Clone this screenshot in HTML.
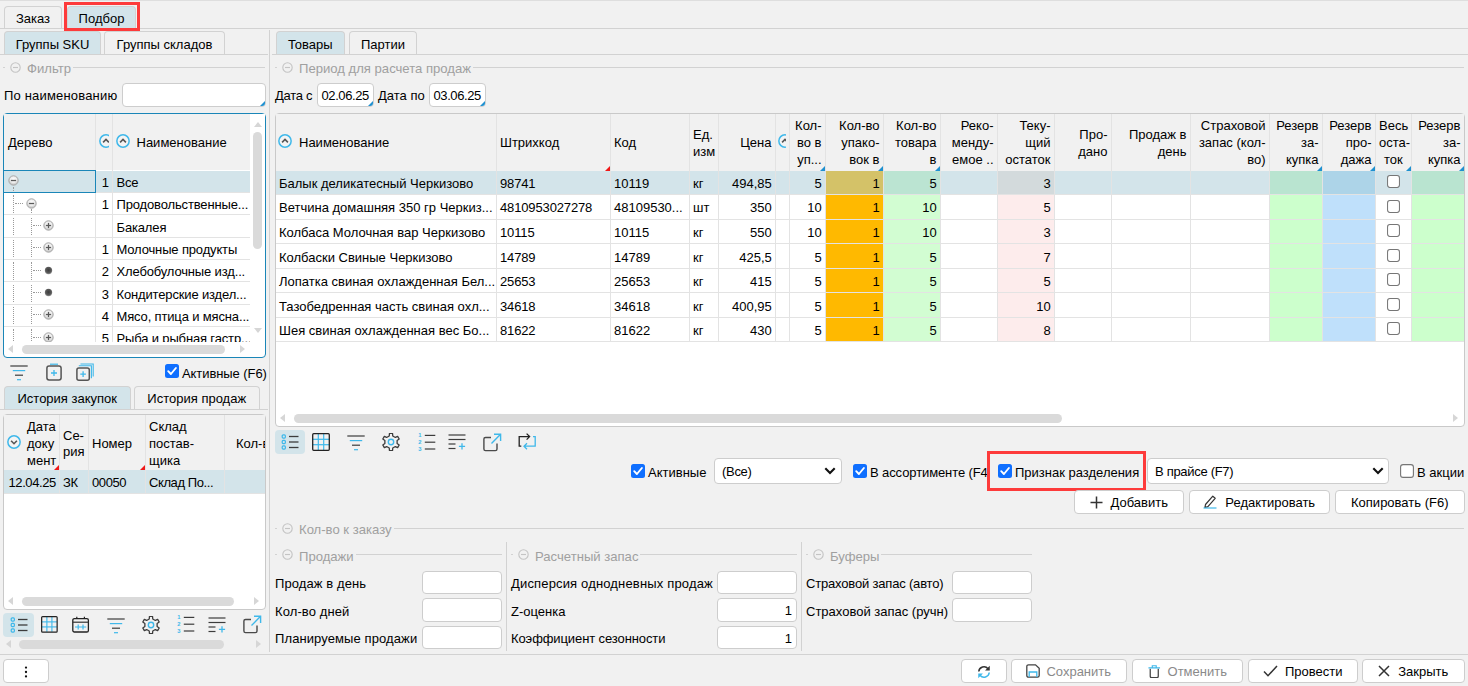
<!DOCTYPE html>
<html><head><meta charset="utf-8"><title>Подбор</title><style>
html,body{margin:0;padding:0}
body{width:1468px;height:686px;overflow:hidden;background:#f1f1f1;font-family:"Liberation Sans",sans-serif;font-size:13px;color:#000;position:relative}
#r{position:absolute;left:0;top:0;width:1468px;height:686px;overflow:hidden}
#r div,#r svg.ic,#r i{position:absolute;box-sizing:border-box}
.t{white-space:nowrap;line-height:15.8px}
.tab{border:1px solid #d2d2d2;border-bottom:none;border-radius:4px 4px 0 0;text-align:center;white-space:nowrap}
.fs{background:#f1f1f1;color:#a0a0a0;padding:0 2px 0 22px;font-size:13.1px}
.num{letter-spacing:-0.4px}
.num2{letter-spacing:-0.14px}
.hl{height:1px;background:#d2d2d2}
.vl{width:1px;background:#d2d2d2}
.vl2{width:1px;background:#e3e3e3}
.hl2{height:1px;background:#e3e3e3}
.red{border:3px solid #fd3b3b}
.inp{background:#fff;border:1px solid #cdcdcd;border-radius:4px;white-space:nowrap;padding:0 4px 0 3.5px;overflow:hidden}
.sel{background:#fff;border:1px solid #cdcdcd;border-radius:4px;white-space:nowrap;padding:0 7px;letter-spacing:-0.3px}
.btn{background:#fff;border:1px solid #cdcdcd;border-radius:4px;white-space:nowrap;text-align:center}
.tri{right:0;bottom:0;width:0;height:0;border-left:5px solid transparent;border-bottom:5px solid #1e90d0}
.trir{width:0;height:0;border-left:5px solid transparent;border-bottom:5px solid #f01818}
.trib{width:0;height:0;border-left:5px solid transparent;border-bottom:5px solid #1e90d0}
.treebox{background:#fff;border:1px solid #1a86b8;border-radius:4px}
.gridbox{background:#fff;border:1px solid #c9c9c9;border-radius:4px}
.hdr{background:#f1f1f1}
.clip{overflow:hidden}
.row{left:0;border-bottom:1px solid #e3e3e3}
.thumb{background:#dadada;border-radius:5px}
.arrL{width:0;height:0;border-top:4.8px solid transparent;border-bottom:4.8px solid transparent;border-right:5.5px solid #d6d6d6;margin-left:1px}
.arrR{width:0;height:0;border-top:4.8px solid transparent;border-bottom:4.8px solid transparent;border-left:5.5px solid #d6d6d6;margin-left:1px}
.arrU{width:0;height:0;border-left:4.5px solid transparent;border-right:4.5px solid transparent;border-bottom:5.5px solid #d6d6d6}
.arrD{width:0;height:0;border-left:4.5px solid transparent;border-right:4.5px solid transparent;border-top:5.5px solid #d6d6d6}
.dv{width:0;border-left:1px dotted #9a9a9a}
.dh{height:0;border-top:1px dotted #9a9a9a}
</style></head><body><div id="r">
<div class="hl" style="left:0;top:0;width:1468px;background:#dedede"></div>
<div class="tab" style="left:4px;top:6px;width:58px;height:22px;background:#f1f1f1;line-height:23px">Заказ</div>
<div class="tab" style="left:67px;top:6px;width:69px;height:22px;background:#d3e4ea;line-height:23px">Подбор</div>
<div class="hl" style="left:0;top:28px;width:1468px"></div>
<div class="red" style="left:64px;top:2px;width:76px;height:29px"></div>
<div class="vl" style="left:269px;top:30px;height:622px"></div>
<div class="tab" style="left:4px;top:31px;width:97px;height:23px;background:#d3e4ea;line-height:25.4px">Группы SKU</div>
<div class="tab" style="left:104px;top:31px;width:121px;height:23px;background:#f1f1f1;line-height:25.4px">Группы складов</div>
<div class="hl" style="left:0;top:54px;width:268px"></div>
<div class="hl" style="left:3px;top:67px;width:262px"></div>
<div class="t fs" style="left:5px;top:60.5px;">Фильтр</div>
<svg class="ic" style="left:10px;top:62px" width="11" height="11" viewBox="0 0 11 11"><circle cx="5.5" cy="5.5" r="4.7" fill="none" stroke="#c4c4c4" stroke-width="1.1"/><line x1="3" y1="5.5" x2="8" y2="5.5" stroke="#c4c4c4" stroke-width="1.1"/></svg>
<div class="t" style="left:4px;top:87.5px;letter-spacing:0.18px">По наименованию</div>
<div class="inp" style="left:122px;top:83px;width:143.5px;height:23.5px;line-height:23.5px;text-align:left"><i class="tri"></i></div>
<div class="treebox" style="left:3px;top:113px;width:263px;height:244.5px"></div>
<div class="hdr" style="left:4px;top:114px;width:246px;height:56px"></div>
<div class="t" style="left:8px;top:135px;">Дерево</div>
<svg class="ic" style="left:99px;top:134.3px" width="10" height="14" viewBox="0 0 10 14"><circle cx="7" cy="7" r="6.15" fill="#f4f4f4" stroke="#3fb8ea" stroke-width="1.5"/><path d="M4.1 8.4L7 5.5l2.9 2.9" fill="none" stroke="#555" stroke-width="1.6"/></svg>
<svg class="ic" style="left:116.1px;top:134.3px" width="14" height="14" viewBox="0 0 14 14"><circle cx="7" cy="7" r="6.15" fill="#f4f4f4" stroke="#3fb8ea" stroke-width="1.5"/><path d="M4.1 8.4L7 5.5l2.9 2.9" fill="none" stroke="#555" stroke-width="1.6"/></svg>
<div class="t" style="left:136.5px;top:135px;">Наименование</div>
<div class="clip" style="left:4px;top:170.5px;width:246px;height:171.5px">
<div class="row" style="top:0.0px;height:22.35px;width:246px;background:#d3e4ea"></div>
<div class="t" style="left:89px;top:4.5px;width:16px;text-align:right">1</div>
<div class="t" style="left:112.5px;top:4.5px;width:133.5px;overflow:hidden;letter-spacing:-0.15px">Все</div>
<div class="row" style="top:22.35px;height:22.35px;width:246px;background:#fff"></div>
<div class="t" style="left:89px;top:26.85px;width:16px;text-align:right">1</div>
<div class="t" style="left:112.5px;top:26.85px;width:133.5px;overflow:hidden;letter-spacing:-0.15px">Продовольственные...</div>
<div class="row" style="top:44.7px;height:22.35px;width:246px;background:#fff"></div>
<div class="t" style="left:89px;top:49.2px;width:16px;text-align:right"></div>
<div class="t" style="left:112.5px;top:49.2px;width:133.5px;overflow:hidden;letter-spacing:-0.15px">Бакалея</div>
<div class="row" style="top:67.05000000000001px;height:22.35px;width:246px;background:#fff"></div>
<div class="t" style="left:89px;top:71.55000000000001px;width:16px;text-align:right">1</div>
<div class="t" style="left:112.5px;top:71.55000000000001px;width:133.5px;overflow:hidden;letter-spacing:-0.15px">Молочные продукты</div>
<div class="row" style="top:89.4px;height:22.35px;width:246px;background:#fff"></div>
<div class="t" style="left:89px;top:93.9px;width:16px;text-align:right">2</div>
<div class="t" style="left:112.5px;top:93.9px;width:133.5px;overflow:hidden;letter-spacing:-0.15px">Хлебобулочные изд...</div>
<div class="row" style="top:111.75px;height:22.35px;width:246px;background:#fff"></div>
<div class="t" style="left:89px;top:116.25px;width:16px;text-align:right">3</div>
<div class="t" style="left:112.5px;top:116.25px;width:133.5px;overflow:hidden;letter-spacing:-0.15px">Кондитерские издел...</div>
<div class="row" style="top:134.10000000000002px;height:22.35px;width:246px;background:#fff"></div>
<div class="t" style="left:89px;top:138.60000000000002px;width:16px;text-align:right">4</div>
<div class="t" style="left:112.5px;top:138.60000000000002px;width:133.5px;overflow:hidden;letter-spacing:-0.15px">Мясо, птица и мясна...</div>
<div class="row" style="top:156.45000000000002px;height:22.35px;width:246px;background:#fff"></div>
<div class="t" style="left:89px;top:160.95000000000002px;width:16px;text-align:right">5</div>
<div class="t" style="left:112.5px;top:160.95000000000002px;width:133.5px;overflow:hidden;letter-spacing:-0.15px">Рыба и рыбная гастр...</div>
<svg class="ic" width="0" height="0" style="left:0;top:0"><defs><radialGradient id="gn" cx="50%" cy="40%" r="60%"><stop offset="0" stop-color="#ffffff"/><stop offset="0.55" stop-color="#ececec"/><stop offset="1" stop-color="#b4b4b4"/></radialGradient><radialGradient id="gd" cx="50%" cy="45%" r="55%"><stop offset="0" stop-color="#3c3c3c"/><stop offset="0.7" stop-color="#5a5a5a"/><stop offset="1" stop-color="#9a9a9a"/></radialGradient></defs></svg>
<div class="dv" style="left:9px;top:16.175px;height:4.175000000000001px"></div>
<div class="dv" style="left:9px;top:24.85px;height:17.35px"></div>
<div class="dv" style="left:9px;top:47.2px;height:17.35px"></div>
<div class="dv" style="left:9px;top:69.55000000000001px;height:17.35px"></div>
<div class="dv" style="left:9px;top:91.9px;height:17.35px"></div>
<div class="dv" style="left:9px;top:114.25px;height:17.35px"></div>
<div class="dv" style="left:9px;top:136.60000000000002px;height:17.35px"></div>
<div class="dv" style="left:9px;top:158.95000000000002px;height:17.35px"></div>
<div class="dv" style="left:27px;top:38.525000000000006px;height:4.175000000000001px"></div>
<div class="dv" style="left:27px;top:47.2px;height:17.35px"></div>
<div class="dv" style="left:27px;top:69.55000000000001px;height:17.35px"></div>
<div class="dv" style="left:27px;top:91.9px;height:17.35px"></div>
<div class="dv" style="left:27px;top:114.25px;height:17.35px"></div>
<div class="dv" style="left:27px;top:136.60000000000002px;height:17.35px"></div>
<div class="dv" style="left:27px;top:158.95000000000002px;height:17.35px"></div>
<div class="dh" style="left:10.5px;top:32.025000000000006px;width:8.5px"></div>
<div class="dh" style="left:28.5px;top:54.375px;width:8px"></div>
<div class="dh" style="left:28.5px;top:76.72500000000001px;width:8px"></div>
<div class="dh" style="left:28.5px;top:99.075px;width:8px"></div>
<div class="dh" style="left:28.5px;top:121.42500000000001px;width:8px"></div>
<div class="dh" style="left:28.5px;top:143.775px;width:8px"></div>
<div class="dh" style="left:28.5px;top:166.125px;width:8px"></div>
<svg class="ic" style="left:4.0px;top:4.675000000000001px" width="11" height="11"><circle cx="5.5" cy="5.5" r="4.7" fill="url(#gn)" stroke="#a9a9a9" stroke-width="1"/><line x1="2.9" y1="5.5" x2="8.1" y2="5.5" stroke="#5a5a5a" stroke-width="1.3"/></svg>
<svg class="ic" style="left:22.0px;top:27.025000000000006px" width="11" height="11"><circle cx="5.5" cy="5.5" r="4.7" fill="url(#gn)" stroke="#a9a9a9" stroke-width="1"/><line x1="2.9" y1="5.5" x2="8.1" y2="5.5" stroke="#5a5a5a" stroke-width="1.3"/></svg>
<svg class="ic" style="left:39.2px;top:49.375px" width="11" height="11"><circle cx="5.5" cy="5.5" r="4.7" fill="url(#gn)" stroke="#a9a9a9" stroke-width="1"/><line x1="2.9" y1="5.5" x2="8.1" y2="5.5" stroke="#5a5a5a" stroke-width="1.3"/><line x1="5.5" y1="2.9" x2="5.5" y2="8.1" stroke="#5a5a5a" stroke-width="1.3"/></svg>
<svg class="ic" style="left:39.2px;top:71.72500000000001px" width="11" height="11"><circle cx="5.5" cy="5.5" r="4.7" fill="url(#gn)" stroke="#a9a9a9" stroke-width="1"/><line x1="2.9" y1="5.5" x2="8.1" y2="5.5" stroke="#5a5a5a" stroke-width="1.3"/><line x1="5.5" y1="2.9" x2="5.5" y2="8.1" stroke="#5a5a5a" stroke-width="1.3"/></svg>
<svg class="ic" style="left:40.2px;top:95.075px" width="9" height="9"><circle cx="4.5" cy="4.5" r="3.7" fill="url(#gd)"/></svg>
<svg class="ic" style="left:40.2px;top:117.42500000000001px" width="9" height="9"><circle cx="4.5" cy="4.5" r="3.7" fill="url(#gd)"/></svg>
<svg class="ic" style="left:39.2px;top:138.775px" width="11" height="11"><circle cx="5.5" cy="5.5" r="4.7" fill="url(#gn)" stroke="#a9a9a9" stroke-width="1"/><line x1="2.9" y1="5.5" x2="8.1" y2="5.5" stroke="#5a5a5a" stroke-width="1.3"/><line x1="5.5" y1="2.9" x2="5.5" y2="8.1" stroke="#5a5a5a" stroke-width="1.3"/></svg>
<svg class="ic" style="left:39.2px;top:161.125px" width="11" height="11"><circle cx="5.5" cy="5.5" r="4.7" fill="url(#gn)" stroke="#a9a9a9" stroke-width="1"/><line x1="2.9" y1="5.5" x2="8.1" y2="5.5" stroke="#5a5a5a" stroke-width="1.3"/><line x1="5.5" y1="2.9" x2="5.5" y2="8.1" stroke="#5a5a5a" stroke-width="1.3"/></svg>
</div>
<div class="vl2" style="left:95px;top:114px;height:228px"></div>
<div class="vl2" style="left:112px;top:114px;height:228px"></div>
<div style="position:absolute;left:3px;top:170px;width:93px;height:23px;border:1px solid #1a86b8;"></div>
<div style="position:absolute;left:250px;top:114px;width:15px;height:229px;background:#fff"></div>
<div class="arrU" style="left:253.5px;top:122px"></div>
<div class="arrD" style="left:253.5px;top:328px"></div>
<div class="thumb" style="left:253px;top:132px;width:9px;height:117px"></div>
<div class="arrL" style="left:7px;top:345px"></div>
<div class="arrR" style="left:239px;top:345px"></div>
<div class="thumb" style="left:22px;top:345px;width:203px;height:9px"></div>
<svg class="ic" style="left:10px;top:363.6px" width="18" height="17" viewBox="0 0 18 17"><line x1="0.3" y1="2" x2="17.7" y2="2" stroke="#3c3c3c" stroke-width="1.2"/><line x1="2.8" y1="6.6" x2="15.2" y2="6.6" stroke="#3fb8ea" stroke-width="1.2"/><line x1="5" y1="11.2" x2="13" y2="11.2" stroke="#3c3c3c" stroke-width="1.2"/><line x1="7" y1="15.7" x2="11" y2="15.7" stroke="#3fb8ea" stroke-width="1.2"/></svg>
<svg class="ic" style="left:46px;top:363px" width="16" height="18" viewBox="0 0 16 18"><path d="M4 1.2h8" stroke="#3fb8ea" stroke-width="1.2"/><rect x="0.9" y="3" width="14.2" height="14" rx="2.2" fill="none" stroke="#555" stroke-width="1.5"/><path d="M8 7v6M5 10h6" stroke="#3fb8ea" stroke-width="1.3"/></svg>
<svg class="ic" style="left:76px;top:363px" width="18" height="18" viewBox="0 0 18 18"><path d="M4.5 1h12.7v12.5M2.8 2.8h12.6v12.4" fill="none" stroke="#3fb8ea" stroke-width="1.1"/><rect x="0.9" y="5" width="12.4" height="12.2" rx="2" fill="#f1f1f1" stroke="#555" stroke-width="1.5"/><path d="M7.1 8.3v5.6M4.3 11.1h5.6" stroke="#3fb8ea" stroke-width="1.3"/></svg>
<svg class="ic" style="left:165px;top:364px" width="14" height="14" viewBox="0 0 14 14"><rect x="0" y="0" width="14" height="14" rx="2.5" fill="#0f6fff"/><path d="M3.2 7.2l2.7 2.8 5-6" fill="none" stroke="#fff" stroke-width="1.9" stroke-linecap="round" stroke-linejoin="round"/></svg>
<div class="t" style="left:182px;top:365.5px;letter-spacing:-0.08px">Активные (F6)</div>
<div class="tab" style="left:4px;top:386px;width:126.5px;height:23px;background:#d3e4ea;line-height:23px">История закупок</div>
<div class="tab" style="left:134px;top:386px;width:125.5px;height:23px;background:#f1f1f1;line-height:23px">История продаж</div>
<div class="hl" style="left:0;top:409px;width:268px"></div>
<div class="gridbox" style="left:3px;top:414px;width:262.5px;height:196px"></div>
<div class="clip" style="left:4px;top:415px;width:261px;height:194px">
<div class="hdr" style="left:0;top:0;width:261px;height:55px"></div>
<div class="row" style="top:55px;height:23.5px;width:261px;background:#d3e4ea"></div>
<div class="vl2" style="left:55px;top:0;height:78.5px"></div>
<div class="vl2" style="left:84px;top:0;height:78.5px"></div>
<div class="vl2" style="left:141px;top:0;height:78.5px"></div>
<div class="vl2" style="left:220px;top:0;height:78.5px"></div>
<svg class="ic" style="left:2.8px;top:20.2px" width="14" height="14" viewBox="0 0 14 14"><circle cx="7" cy="7" r="6.15" fill="#f4f4f4" stroke="#3fb8ea" stroke-width="1.5"/><path d="M4.1 5.8L7 8.7l2.9-2.9" fill="none" stroke="#555" stroke-width="1.6"/></svg>
<div class="t" style="left:23px;top:4px;line-height:16.8px;">Дата<br>доку<br>мент</div>
<div class="t" style="left:59px;top:12.5px;line-height:16.8px;width:24px">Се-<br>рия</div>
<div class="t" style="left:88px;top:21px;">Номер</div>
<div class="t" style="left:145px;top:4px;line-height:16.8px;">Склад<br>постав-<br>щика</div>
<div class="t" style="left:232px;top:21px;">Кол-во</div>
<i class="trir" style="left:50px;top:50px"></i>
<i class="trir" style="left:136px;top:50px"></i>
<div class="t num" style="left:4.5px;top:59.5px;">12.04.25</div>
<div class="t num" style="left:59px;top:59.5px;">ЗК</div>
<div class="t num" style="left:88px;top:59.5px;">00050</div>
<div class="t num" style="left:145px;top:59.5px;">Склад По...</div>
</div>
<div class="arrL" style="left:7px;top:597px"></div>
<div class="arrR" style="left:253px;top:597px"></div>
<div class="thumb" style="left:22px;top:597px;width:212px;height:9px"></div>
<div style="position:absolute;left:3px;top:613px;width:31px;height:24px;border-radius:4px;background:#d3e4ea"></div>
<svg class="ic" style="left:9.5px;top:615.5px" width="18" height="18" viewBox="0 0 18 18"><rect x="1.2" y="1.9" width="3.2" height="3.2" rx="1" fill="none" stroke="#3fb8ea" stroke-width="1.2"/><line x1="8" y1="3.5" x2="17.5" y2="3.5" stroke="#3c3c3c" stroke-width="1.3"/><rect x="1.2" y="7.4" width="3.2" height="3.2" rx="1" fill="none" stroke="#3fb8ea" stroke-width="1.2"/><line x1="8" y1="9" x2="17.5" y2="9" stroke="#3c3c3c" stroke-width="1.3"/><rect x="1.2" y="12.9" width="3.2" height="3.2" rx="1" fill="none" stroke="#3fb8ea" stroke-width="1.2"/><line x1="8" y1="14.5" x2="17.5" y2="14.5" stroke="#3c3c3c" stroke-width="1.3"/></svg>
<svg class="ic" style="left:41px;top:616.2px" width="16.8" height="16.8" viewBox="0 0 18 18"><g stroke="#3fb8ea" stroke-width="1.2"><line x1="6.3" y1="1" x2="6.3" y2="17"/><line x1="1" y1="6.3" x2="17" y2="6.3"/><line x1="11.7" y1="1" x2="11.7" y2="17"/><line x1="1" y1="11.7" x2="17" y2="11.7"/></g><rect x="0.7" y="0.7" width="16.6" height="16.6" rx="1" fill="none" stroke="#222" stroke-width="1.3"/></svg>
<svg class="ic" style="left:72px;top:615px" width="18" height="18" viewBox="0 0 18 18"><rect x="0.8" y="3.6" width="15.6" height="13.4" rx="1.6" fill="none" stroke="#222" stroke-width="1.3"/><line x1="0.8" y1="7.2" x2="16.4" y2="7.2" stroke="#333" stroke-width="1.2"/><path d="M4.8 1.8v2M12.4 1.8v2" stroke="#222" stroke-width="1.2"/><path d="M3 12h11.2M6.2 9.4v5.2M11 9.4v5.2" stroke="#3fb8ea" stroke-width="1.2" fill="none"/></svg>
<svg class="ic" style="left:107px;top:616.5px" width="18" height="17" viewBox="0 0 18 17"><line x1="0.3" y1="2" x2="17.7" y2="2" stroke="#3c3c3c" stroke-width="1.2"/><line x1="2.8" y1="6.6" x2="15.2" y2="6.6" stroke="#3fb8ea" stroke-width="1.2"/><line x1="5" y1="11.2" x2="13" y2="11.2" stroke="#3c3c3c" stroke-width="1.2"/><line x1="7" y1="15.7" x2="11" y2="15.7" stroke="#3fb8ea" stroke-width="1.2"/></svg>
<svg class="ic" style="left:141.5px;top:615.5px" width="18" height="18" viewBox="0 0 18 18"><path d="M7.46 0.44 L10.54 0.44 L10.76 2.95 L13.36 4.45 L15.65 3.38 L17.19 6.05 L15.12 7.50 L15.12 10.50 L17.19 11.95 L15.65 14.62 L13.36 13.55 L10.76 15.05 L10.54 17.56 L7.46 17.56 L7.24 15.05 L4.64 13.55 L2.35 14.62 L0.81 11.95 L2.88 10.50 L2.88 7.50 L0.81 6.05 L2.35 3.38 L4.64 4.45 L7.24 2.95Z" fill="none" stroke="#3c3c3c" stroke-width="1.3" stroke-linejoin="round"/><circle cx="9" cy="9" r="2.7" fill="none" stroke="#3fb8ea" stroke-width="1.4"/></svg>
<svg class="ic" style="left:177px;top:615.2px" width="18" height="19" viewBox="0 0 18 19"><text x="0.3" y="4.4" font-size="5.8" font-weight="bold" fill="#3fb8ea" font-family="Liberation Sans">1</text><line x1="6.8" y1="2.4" x2="17.3" y2="2.4" stroke="#3c3c3c" stroke-width="1.2"/><text x="0.3" y="11.2" font-size="5.8" font-weight="bold" fill="#3fb8ea" font-family="Liberation Sans">2</text><line x1="6.8" y1="9.2" x2="17.3" y2="9.2" stroke="#3c3c3c" stroke-width="1.2"/><text x="0.3" y="18" font-size="5.8" font-weight="bold" fill="#3fb8ea" font-family="Liberation Sans">3</text><line x1="6.8" y1="16" x2="17.3" y2="16" stroke="#3c3c3c" stroke-width="1.2"/></svg>
<svg class="ic" style="left:208px;top:615.5px" width="18" height="18" viewBox="0 0 18 18"><line x1="0.5" y1="2" x2="17.5" y2="2" stroke="#3c3c3c" stroke-width="1.2"/><line x1="0.5" y1="6.5" x2="17.5" y2="6.5" stroke="#3c3c3c" stroke-width="1.2"/><line x1="0.5" y1="11" x2="7.5" y2="11" stroke="#3c3c3c" stroke-width="1.2"/><line x1="0.5" y1="15.5" x2="7.5" y2="15.5" stroke="#3c3c3c" stroke-width="1.2"/><path d="M14 10.2v6.2M10.9 13.3h6.2" stroke="#3fb8ea" stroke-width="1.3" fill="none"/></svg>
<div class="clip" style="left:240px;top:612px;width:22px;height:26px">
<svg class="ic" style="left:2.5px;top:3px" width="19" height="19" viewBox="0 0 19 19"><path d="M8 4.5H2.5a1.6 1.6 0 0 0-1.6 1.6V16a1.6 1.6 0 0 0 1.6 1.6H12.4A1.6 1.6 0 0 0 14 16V10.5" fill="none" stroke="#4a4a4a" stroke-width="1.4"/><path d="M8.5 10.5L17.3 1.6M11 1.3h6.6v6.6" fill="none" stroke="#3fb8ea" stroke-width="1.4"/></svg>
</div>
<div class="arrL" style="left:5px;top:640px"></div>
<div class="arrR" style="left:255px;top:640px"></div>
<div class="thumb" style="left:19px;top:640px;width:204.5px;height:9px"></div>
<div class="tab" style="left:276px;top:31px;width:68.5px;height:23px;background:#d3e4ea;line-height:25.4px">Товары</div>
<div class="tab" style="left:349px;top:31px;width:68px;height:23px;background:#f1f1f1;line-height:25.4px">Партии</div>
<div class="hl" style="left:271.5px;top:54px;width:1197px"></div>
<div class="hl" style="left:275px;top:67px;width:1189px"></div>
<div class="t fs" style="left:277px;top:60.5px;">Период для расчета продаж</div>
<svg class="ic" style="left:282px;top:62px" width="11" height="11" viewBox="0 0 11 11"><circle cx="5.5" cy="5.5" r="4.7" fill="none" stroke="#c4c4c4" stroke-width="1.1"/><line x1="3" y1="5.5" x2="8" y2="5.5" stroke="#c4c4c4" stroke-width="1.1"/></svg>
<div class="t" style="left:275px;top:87.5px;letter-spacing:-0.3px">Дата с</div>
<div class="inp" style="left:317px;top:83px;width:56.5px;height:23.5px;line-height:23.5px;text-align:left"><span class="num">02.06.25</span><i class="tri"></i></div>
<div class="t" style="left:378px;top:87.5px;">Дата по</div>
<div class="inp" style="left:429px;top:83px;width:56.5px;height:23.5px;line-height:23.5px;text-align:left"><span class="num">03.06.25</span><i class="tri"></i></div>
<div class="gridbox" style="left:275px;top:113px;width:1189.5px;height:313.5px"></div>
<div class="clip" style="left:276px;top:114px;width:1188px;height:311.5px">
<div class="hdr" style="left:0;top:0;width:1188px;height:56.5px"></div>
<div class="row" style="top:56.5px;height:24.5px;width:1188.5px;background:#d3e4ea"></div>
<div style="position:absolute;left:549.5px;top:56.5px;width:57.5px;height:24.5px;background:#d4c268"></div>
<div style="position:absolute;left:607.5px;top:56.5px;width:56.5px;height:24.5px;background:#bbe4d2"></div>
<div style="position:absolute;left:721.5px;top:56.5px;width:56.5px;height:24.5px;background:#d3dadc"></div>
<div style="position:absolute;left:993.5px;top:56.5px;width:52.5px;height:24.5px;background:#b9e4d0"></div>
<div style="position:absolute;left:1046.5px;top:56.5px;width:52.5px;height:24.5px;background:#add4e8"></div>
<div style="position:absolute;left:1135.5px;top:56.5px;width:52.5px;height:24.5px;background:#b9e4d0"></div>
<div class="t" style="left:3px;top:61.7px;">Балык деликатесный Черкизово</div>
<div class="t num2" style="left:224px;top:61.7px;">98741</div>
<div class="t" style="left:338px;top:61.7px;">10119</div>
<div class="t" style="left:417px;top:61.7px;">кг</div>
<div class="t" style="left:442px;width:53.8px;text-align:right;top:61.7px;">494,85</div>
<div class="t" style="left:513px;width:32.8px;text-align:right;top:61.7px;">5</div>
<div class="t" style="left:549px;width:54.8px;text-align:right;top:61.7px;">1</div>
<div class="t" style="left:607px;width:53.8px;text-align:right;top:61.7px;">5</div>
<div class="t" style="left:721px;width:53.8px;text-align:right;top:61.7px;">3</div>
<svg class="ic" style="left:1111px;top:61.0px" width="13" height="13" viewBox="0 0 14 14"><rect x="0.6" y="0.6" width="12.8" height="12.8" rx="2.5" fill="#fff" stroke="#767676" stroke-width="1.1"/></svg>
<div class="row" style="top:81.0px;height:24.5px;width:1188.5px;background:#fff"></div>
<div style="position:absolute;left:549.5px;top:81.0px;width:57.5px;height:24.5px;background:#ffb900"></div>
<div style="position:absolute;left:607.5px;top:81.0px;width:56.5px;height:24.5px;background:#d2fdd2"></div>
<div style="position:absolute;left:721.5px;top:81.0px;width:56.5px;height:24.5px;background:#fdecec"></div>
<div style="position:absolute;left:993.5px;top:81.0px;width:52.5px;height:24.5px;background:#ccffcc"></div>
<div style="position:absolute;left:1046.5px;top:81.0px;width:52.5px;height:24.5px;background:#bfe0fb"></div>
<div style="position:absolute;left:1135.5px;top:81.0px;width:52.5px;height:24.5px;background:#ccffcc"></div>
<div class="t" style="left:3px;top:86.2px;">Ветчина домашняя 350 гр Черкиз...</div>
<div class="t num2" style="left:224px;top:86.2px;">4810953027278</div>
<div class="t" style="left:338px;top:86.2px;">48109530...</div>
<div class="t" style="left:417px;top:86.2px;">шт</div>
<div class="t" style="left:442px;width:53.8px;text-align:right;top:86.2px;">350</div>
<div class="t" style="left:513px;width:32.8px;text-align:right;top:86.2px;">10</div>
<div class="t" style="left:549px;width:54.8px;text-align:right;top:86.2px;">1</div>
<div class="t" style="left:607px;width:53.8px;text-align:right;top:86.2px;">10</div>
<div class="t" style="left:721px;width:53.8px;text-align:right;top:86.2px;">5</div>
<svg class="ic" style="left:1111px;top:85.5px" width="13" height="13" viewBox="0 0 14 14"><rect x="0.6" y="0.6" width="12.8" height="12.8" rx="2.5" fill="#fff" stroke="#767676" stroke-width="1.1"/></svg>
<div class="row" style="top:105.5px;height:24.5px;width:1188.5px;background:#fff"></div>
<div style="position:absolute;left:549.5px;top:105.5px;width:57.5px;height:24.5px;background:#ffb900"></div>
<div style="position:absolute;left:607.5px;top:105.5px;width:56.5px;height:24.5px;background:#d2fdd2"></div>
<div style="position:absolute;left:721.5px;top:105.5px;width:56.5px;height:24.5px;background:#fdecec"></div>
<div style="position:absolute;left:993.5px;top:105.5px;width:52.5px;height:24.5px;background:#ccffcc"></div>
<div style="position:absolute;left:1046.5px;top:105.5px;width:52.5px;height:24.5px;background:#bfe0fb"></div>
<div style="position:absolute;left:1135.5px;top:105.5px;width:52.5px;height:24.5px;background:#ccffcc"></div>
<div class="t" style="left:3px;top:110.7px;">Колбаса Молочная вар Черкизово</div>
<div class="t num2" style="left:224px;top:110.7px;">10115</div>
<div class="t" style="left:338px;top:110.7px;">10115</div>
<div class="t" style="left:417px;top:110.7px;">кг</div>
<div class="t" style="left:442px;width:53.8px;text-align:right;top:110.7px;">550</div>
<div class="t" style="left:513px;width:32.8px;text-align:right;top:110.7px;">10</div>
<div class="t" style="left:549px;width:54.8px;text-align:right;top:110.7px;">1</div>
<div class="t" style="left:607px;width:53.8px;text-align:right;top:110.7px;">10</div>
<div class="t" style="left:721px;width:53.8px;text-align:right;top:110.7px;">3</div>
<svg class="ic" style="left:1111px;top:110.0px" width="13" height="13" viewBox="0 0 14 14"><rect x="0.6" y="0.6" width="12.8" height="12.8" rx="2.5" fill="#fff" stroke="#767676" stroke-width="1.1"/></svg>
<div class="row" style="top:130.0px;height:24.5px;width:1188.5px;background:#fff"></div>
<div style="position:absolute;left:549.5px;top:130.0px;width:57.5px;height:24.5px;background:#ffb900"></div>
<div style="position:absolute;left:607.5px;top:130.0px;width:56.5px;height:24.5px;background:#d2fdd2"></div>
<div style="position:absolute;left:721.5px;top:130.0px;width:56.5px;height:24.5px;background:#fdecec"></div>
<div style="position:absolute;left:993.5px;top:130.0px;width:52.5px;height:24.5px;background:#ccffcc"></div>
<div style="position:absolute;left:1046.5px;top:130.0px;width:52.5px;height:24.5px;background:#bfe0fb"></div>
<div style="position:absolute;left:1135.5px;top:130.0px;width:52.5px;height:24.5px;background:#ccffcc"></div>
<div class="t" style="left:3px;top:135.79999999999998px;">Колбаски Свиные Черкизово</div>
<div class="t num2" style="left:224px;top:135.79999999999998px;">14789</div>
<div class="t" style="left:338px;top:135.79999999999998px;">14789</div>
<div class="t" style="left:417px;top:135.79999999999998px;">кг</div>
<div class="t" style="left:442px;width:53.8px;text-align:right;top:135.79999999999998px;">425,5</div>
<div class="t" style="left:513px;width:32.8px;text-align:right;top:135.79999999999998px;">5</div>
<div class="t" style="left:549px;width:54.8px;text-align:right;top:135.79999999999998px;">1</div>
<div class="t" style="left:607px;width:53.8px;text-align:right;top:135.79999999999998px;">5</div>
<div class="t" style="left:721px;width:53.8px;text-align:right;top:135.79999999999998px;">7</div>
<svg class="ic" style="left:1111px;top:134.5px" width="13" height="13" viewBox="0 0 14 14"><rect x="0.6" y="0.6" width="12.8" height="12.8" rx="2.5" fill="#fff" stroke="#767676" stroke-width="1.1"/></svg>
<div class="row" style="top:154.5px;height:24.5px;width:1188.5px;background:#fff"></div>
<div style="position:absolute;left:549.5px;top:154.5px;width:57.5px;height:24.5px;background:#ffb900"></div>
<div style="position:absolute;left:607.5px;top:154.5px;width:56.5px;height:24.5px;background:#d2fdd2"></div>
<div style="position:absolute;left:721.5px;top:154.5px;width:56.5px;height:24.5px;background:#fdecec"></div>
<div style="position:absolute;left:993.5px;top:154.5px;width:52.5px;height:24.5px;background:#ccffcc"></div>
<div style="position:absolute;left:1046.5px;top:154.5px;width:52.5px;height:24.5px;background:#bfe0fb"></div>
<div style="position:absolute;left:1135.5px;top:154.5px;width:52.5px;height:24.5px;background:#ccffcc"></div>
<div class="t" style="left:3px;top:159.7px;">Лопатка свиная охлажденная Бел...</div>
<div class="t num2" style="left:224px;top:159.7px;">25653</div>
<div class="t" style="left:338px;top:159.7px;">25653</div>
<div class="t" style="left:417px;top:159.7px;">кг</div>
<div class="t" style="left:442px;width:53.8px;text-align:right;top:159.7px;">415</div>
<div class="t" style="left:513px;width:32.8px;text-align:right;top:159.7px;">5</div>
<div class="t" style="left:549px;width:54.8px;text-align:right;top:159.7px;">1</div>
<div class="t" style="left:607px;width:53.8px;text-align:right;top:159.7px;">5</div>
<div class="t" style="left:721px;width:53.8px;text-align:right;top:159.7px;">5</div>
<svg class="ic" style="left:1111px;top:159.0px" width="13" height="13" viewBox="0 0 14 14"><rect x="0.6" y="0.6" width="12.8" height="12.8" rx="2.5" fill="#fff" stroke="#767676" stroke-width="1.1"/></svg>
<div class="row" style="top:179.0px;height:24.5px;width:1188.5px;background:#fff"></div>
<div style="position:absolute;left:549.5px;top:179.0px;width:57.5px;height:24.5px;background:#ffb900"></div>
<div style="position:absolute;left:607.5px;top:179.0px;width:56.5px;height:24.5px;background:#d2fdd2"></div>
<div style="position:absolute;left:721.5px;top:179.0px;width:56.5px;height:24.5px;background:#fdecec"></div>
<div style="position:absolute;left:993.5px;top:179.0px;width:52.5px;height:24.5px;background:#ccffcc"></div>
<div style="position:absolute;left:1046.5px;top:179.0px;width:52.5px;height:24.5px;background:#bfe0fb"></div>
<div style="position:absolute;left:1135.5px;top:179.0px;width:52.5px;height:24.5px;background:#ccffcc"></div>
<div class="t" style="left:3px;top:184.79999999999998px;">Тазобедренная часть свиная охл...</div>
<div class="t num2" style="left:224px;top:184.79999999999998px;">34618</div>
<div class="t" style="left:338px;top:184.79999999999998px;">34618</div>
<div class="t" style="left:417px;top:184.79999999999998px;">кг</div>
<div class="t" style="left:442px;width:53.8px;text-align:right;top:184.79999999999998px;">400,95</div>
<div class="t" style="left:513px;width:32.8px;text-align:right;top:184.79999999999998px;">5</div>
<div class="t" style="left:549px;width:54.8px;text-align:right;top:184.79999999999998px;">1</div>
<div class="t" style="left:607px;width:53.8px;text-align:right;top:184.79999999999998px;">5</div>
<div class="t" style="left:721px;width:53.8px;text-align:right;top:184.79999999999998px;">10</div>
<svg class="ic" style="left:1111px;top:183.5px" width="13" height="13" viewBox="0 0 14 14"><rect x="0.6" y="0.6" width="12.8" height="12.8" rx="2.5" fill="#fff" stroke="#767676" stroke-width="1.1"/></svg>
<div class="row" style="top:203.5px;height:24.5px;width:1188.5px;background:#fff"></div>
<div style="position:absolute;left:549.5px;top:203.5px;width:57.5px;height:24.5px;background:#ffb900"></div>
<div style="position:absolute;left:607.5px;top:203.5px;width:56.5px;height:24.5px;background:#d2fdd2"></div>
<div style="position:absolute;left:721.5px;top:203.5px;width:56.5px;height:24.5px;background:#fdecec"></div>
<div style="position:absolute;left:993.5px;top:203.5px;width:52.5px;height:24.5px;background:#ccffcc"></div>
<div style="position:absolute;left:1046.5px;top:203.5px;width:52.5px;height:24.5px;background:#bfe0fb"></div>
<div style="position:absolute;left:1135.5px;top:203.5px;width:52.5px;height:24.5px;background:#ccffcc"></div>
<div class="t" style="left:3px;top:208.7px;">Шея свиная охлажденная вес Бо...</div>
<div class="t num2" style="left:224px;top:208.7px;">81622</div>
<div class="t" style="left:338px;top:208.7px;">81622</div>
<div class="t" style="left:417px;top:208.7px;">кг</div>
<div class="t" style="left:442px;width:53.8px;text-align:right;top:208.7px;">430</div>
<div class="t" style="left:513px;width:32.8px;text-align:right;top:208.7px;">5</div>
<div class="t" style="left:549px;width:54.8px;text-align:right;top:208.7px;">1</div>
<div class="t" style="left:607px;width:53.8px;text-align:right;top:208.7px;">5</div>
<div class="t" style="left:721px;width:53.8px;text-align:right;top:208.7px;">8</div>
<svg class="ic" style="left:1111px;top:208.0px" width="13" height="13" viewBox="0 0 14 14"><rect x="0.6" y="0.6" width="12.8" height="12.8" rx="2.5" fill="#fff" stroke="#767676" stroke-width="1.1"/></svg>
<div class="hl2" style="left:0;top:80.0px;width:1188.5px"></div>
<div class="hl2" style="left:0;top:104.5px;width:1188.5px"></div>
<div class="hl2" style="left:0;top:129.0px;width:1188.5px"></div>
<div class="hl2" style="left:0;top:153.5px;width:1188.5px"></div>
<div class="hl2" style="left:0;top:178.0px;width:1188.5px"></div>
<div class="hl2" style="left:0;top:202.5px;width:1188.5px"></div>
<div class="hl2" style="left:0;top:227.0px;width:1188.5px"></div>
<div class="vl2" style="left:220px;top:0;height:228.0px"></div>
<div class="vl2" style="left:334px;top:0;height:228.0px"></div>
<div class="vl2" style="left:413px;top:0;height:228.0px"></div>
<div class="vl2" style="left:442px;top:0;height:228.0px"></div>
<div class="vl2" style="left:499px;top:0;height:228.0px"></div>
<div class="vl2" style="left:513px;top:0;height:228.0px"></div>
<div class="vl2" style="left:549px;top:0;height:228.0px"></div>
<div class="vl2" style="left:607px;top:0;height:228.0px"></div>
<div class="vl2" style="left:664px;top:0;height:228.0px"></div>
<div class="vl2" style="left:721px;top:0;height:228.0px"></div>
<div class="vl2" style="left:778px;top:0;height:228.0px"></div>
<div class="vl2" style="left:835px;top:0;height:228.0px"></div>
<div class="vl2" style="left:914px;top:0;height:228.0px"></div>
<div class="vl2" style="left:993px;top:0;height:228.0px"></div>
<div class="vl2" style="left:1046px;top:0;height:228.0px"></div>
<div class="vl2" style="left:1099px;top:0;height:228.0px"></div>
<div class="vl2" style="left:1135px;top:0;height:228.0px"></div>
<svg class="ic" style="left:2.3px;top:20.3px" width="14" height="14" viewBox="0 0 14 14"><circle cx="7" cy="7" r="6.15" fill="#f4f4f4" stroke="#3fb8ea" stroke-width="1.5"/><path d="M4.1 8.4L7 5.5l2.9 2.9" fill="none" stroke="#555" stroke-width="1.6"/></svg>
<div class="t" style="left:23px;top:21px;">Наименование</div>
<div class="t" style="left:224px;width:106.5px;top:20.3px;line-height:17.0px;text-align:left">Штрихкод</div>
<div class="t" style="left:338px;width:71.5px;top:20.3px;line-height:17.0px;text-align:left">Код</div>
<div class="t" style="left:417px;width:21.5px;top:12.399999999999999px;line-height:17.0px;text-align:left">Ед.<br>изм</div>
<div class="t" style="left:446px;width:49.5px;top:20.3px;line-height:17.0px;text-align:right">Цена</div>
<div class="clip" style="left:502px;top:20.3px;width:7.5px;height:15px">
<svg class="ic" style="left:0px;top:0px" width="14" height="14" viewBox="0 0 14 14"><circle cx="7" cy="7" r="6.15" fill="#f4f4f4" stroke="#3fb8ea" stroke-width="1.5"/><path d="M4.1 8.4L7 5.5l2.9 2.9" fill="none" stroke="#555" stroke-width="1.6"/></svg>
</div>
<div class="t" style="left:517px;width:28.5px;top:3.3999999999999986px;line-height:17.0px;text-align:right">Кол-<br>во в<br>уп...</div>
<div class="t" style="left:553px;width:50.5px;top:3.3999999999999986px;line-height:17.0px;text-align:right">Кол-во<br>упако-<br>вок в</div>
<div class="t" style="left:611px;width:49.5px;top:3.3999999999999986px;line-height:17.0px;text-align:right">Кол-во<br>товара<br>в</div>
<div class="t" style="left:668px;width:49.5px;top:3.3999999999999986px;line-height:17.0px;text-align:right">Реко-<br>менду-<br>емое ..</div>
<div class="t" style="left:725px;width:49.5px;top:3.3999999999999986px;line-height:17.0px;text-align:right">Теку-<br>щий<br>остаток</div>
<div class="t" style="left:782px;width:49.5px;top:12.399999999999999px;line-height:17.0px;text-align:right">Про-<br>дано</div>
<div class="t" style="left:839px;width:71.5px;top:12.399999999999999px;line-height:17.0px;text-align:right">Продаж в<br>день</div>
<div class="t" style="left:918px;width:71.5px;top:3.3999999999999986px;line-height:17.0px;text-align:right">Страховой<br>запас (кол-<br>во)</div>
<div class="t" style="left:997px;width:45.5px;top:3.3999999999999986px;line-height:17.0px;text-align:right">Резерв<br>за-<br>купка</div>
<div class="t" style="left:1050px;width:45.5px;top:3.3999999999999986px;line-height:17.0px;text-align:right">Резерв<br>про-<br>дажа</div>
<div class="t" style="left:1103px;width:28.5px;top:3.3999999999999986px;line-height:17.0px;text-align:center">Весь<br>оста-<br>ток</div>
<div class="t" style="left:1139px;width:45.5px;top:3.3999999999999986px;line-height:17.0px;text-align:right">Резерв<br>за-<br>купка</div>
<i class="trir" style="left:329px;top:51.5px"></i>
<i class="trib" style="left:544px;top:51.5px"></i>
<i class="trib" style="left:602px;top:51.5px"></i>
<i class="trib" style="left:659px;top:51.5px"></i>
<i class="trib" style="left:1041px;top:51.5px"></i>
<i class="trib" style="left:1094px;top:51.5px"></i>
<i class="trib" style="left:1130px;top:51.5px"></i>
<i class="trib" style="left:1183px;top:51.5px"></i>
</div>
<div class="arrL" style="left:279px;top:414px"></div>
<div class="arrR" style="left:1452px;top:414px"></div>
<div class="thumb" style="left:294px;top:414px;width:768px;height:9px"></div>
<div style="position:absolute;left:275px;top:430px;width:30px;height:24px;border-radius:4px;background:#d3e4ea"></div>
<svg class="ic" style="left:281px;top:433px" width="18" height="18" viewBox="0 0 18 18"><rect x="1.2" y="1.9" width="3.2" height="3.2" rx="1" fill="none" stroke="#3fb8ea" stroke-width="1.2"/><line x1="8" y1="3.5" x2="17.5" y2="3.5" stroke="#3c3c3c" stroke-width="1.3"/><rect x="1.2" y="7.4" width="3.2" height="3.2" rx="1" fill="none" stroke="#3fb8ea" stroke-width="1.2"/><line x1="8" y1="9" x2="17.5" y2="9" stroke="#3c3c3c" stroke-width="1.3"/><rect x="1.2" y="12.9" width="3.2" height="3.2" rx="1" fill="none" stroke="#3fb8ea" stroke-width="1.2"/><line x1="8" y1="14.5" x2="17.5" y2="14.5" stroke="#3c3c3c" stroke-width="1.3"/></svg>
<svg class="ic" style="left:312px;top:433px" width="18" height="18" viewBox="0 0 18 18"><g stroke="#3fb8ea" stroke-width="1.2"><line x1="6.3" y1="1" x2="6.3" y2="17"/><line x1="1" y1="6.3" x2="17" y2="6.3"/><line x1="11.7" y1="1" x2="11.7" y2="17"/><line x1="1" y1="11.7" x2="17" y2="11.7"/></g><rect x="0.7" y="0.7" width="16.6" height="16.6" rx="1" fill="none" stroke="#222" stroke-width="1.3"/></svg>
<svg class="ic" style="left:347px;top:433.5px" width="18" height="17" viewBox="0 0 18 17"><line x1="0.3" y1="2" x2="17.7" y2="2" stroke="#3c3c3c" stroke-width="1.2"/><line x1="2.8" y1="6.6" x2="15.2" y2="6.6" stroke="#3fb8ea" stroke-width="1.2"/><line x1="5" y1="11.2" x2="13" y2="11.2" stroke="#3c3c3c" stroke-width="1.2"/><line x1="7" y1="15.7" x2="11" y2="15.7" stroke="#3fb8ea" stroke-width="1.2"/></svg>
<svg class="ic" style="left:382px;top:433px" width="18" height="18" viewBox="0 0 18 18"><path d="M7.46 0.44 L10.54 0.44 L10.76 2.95 L13.36 4.45 L15.65 3.38 L17.19 6.05 L15.12 7.50 L15.12 10.50 L17.19 11.95 L15.65 14.62 L13.36 13.55 L10.76 15.05 L10.54 17.56 L7.46 17.56 L7.24 15.05 L4.64 13.55 L2.35 14.62 L0.81 11.95 L2.88 10.50 L2.88 7.50 L0.81 6.05 L2.35 3.38 L4.64 4.45 L7.24 2.95Z" fill="none" stroke="#3c3c3c" stroke-width="1.3" stroke-linejoin="round"/><circle cx="9" cy="9" r="2.7" fill="none" stroke="#3fb8ea" stroke-width="1.4"/></svg>
<svg class="ic" style="left:417.5px;top:433.2px" width="18" height="19" viewBox="0 0 18 19"><text x="0.3" y="4.4" font-size="5.8" font-weight="bold" fill="#3fb8ea" font-family="Liberation Sans">1</text><line x1="6.8" y1="2.4" x2="17.3" y2="2.4" stroke="#3c3c3c" stroke-width="1.2"/><text x="0.3" y="11.2" font-size="5.8" font-weight="bold" fill="#3fb8ea" font-family="Liberation Sans">2</text><line x1="6.8" y1="9.2" x2="17.3" y2="9.2" stroke="#3c3c3c" stroke-width="1.2"/><text x="0.3" y="18" font-size="5.8" font-weight="bold" fill="#3fb8ea" font-family="Liberation Sans">3</text><line x1="6.8" y1="16" x2="17.3" y2="16" stroke="#3c3c3c" stroke-width="1.2"/></svg>
<svg class="ic" style="left:448px;top:433px" width="18" height="18" viewBox="0 0 18 18"><line x1="0.5" y1="2" x2="17.5" y2="2" stroke="#3c3c3c" stroke-width="1.2"/><line x1="0.5" y1="6.5" x2="17.5" y2="6.5" stroke="#3c3c3c" stroke-width="1.2"/><line x1="0.5" y1="11" x2="7.5" y2="11" stroke="#3c3c3c" stroke-width="1.2"/><line x1="0.5" y1="15.5" x2="7.5" y2="15.5" stroke="#3c3c3c" stroke-width="1.2"/><path d="M14 10.2v6.2M10.9 13.3h6.2" stroke="#3fb8ea" stroke-width="1.3" fill="none"/></svg>
<svg class="ic" style="left:482.5px;top:432.5px" width="19" height="19" viewBox="0 0 19 19"><path d="M8 4.5H2.5a1.6 1.6 0 0 0-1.6 1.6V16a1.6 1.6 0 0 0 1.6 1.6H12.4A1.6 1.6 0 0 0 14 16V10.5" fill="none" stroke="#4a4a4a" stroke-width="1.4"/><path d="M8.5 10.5L17.3 1.6M11 1.3h6.6v6.6" fill="none" stroke="#3fb8ea" stroke-width="1.4"/></svg>
<svg class="ic" style="left:518.3px;top:432.8px" width="18" height="18" viewBox="0 0 18 18"><path d="M3.3 13.2H1.2V3.6H11.5M8.6 0.6l3 3-3 3" fill="none" stroke="#222" stroke-width="1.3"/><path d="M15 3.6h2.2v9.6H6.2M9 10.2l-3 3 3 3" fill="none" stroke="#3fb8ea" stroke-width="1.3"/></svg>
<svg class="ic" style="left:631px;top:463.5px" width="14" height="14" viewBox="0 0 14 14"><rect x="0" y="0" width="14" height="14" rx="2.5" fill="#0f6fff"/><path d="M3.2 7.2l2.7 2.8 5-6" fill="none" stroke="#fff" stroke-width="1.9" stroke-linecap="round" stroke-linejoin="round"/></svg>
<div class="t" style="left:648px;top:464.5px;">Активные</div>
<div class="sel" style="left:714px;top:458px;width:127.5px;height:25.5px;line-height:25.5px"><span>(Все)</span><svg width="12" height="8" viewBox="0 0 12 8" style="position:absolute;right:4.5px;top:8.25px"><path d="M1.3 1.2L6 5.9l4.7-4.7" fill="none" stroke="#111" stroke-width="2.1"/></svg></div>
<svg class="ic" style="left:852.5px;top:463.5px" width="14" height="14" viewBox="0 0 14 14"><rect x="0" y="0" width="14" height="14" rx="2.5" fill="#0f6fff"/><path d="M3.2 7.2l2.7 2.8 5-6" fill="none" stroke="#fff" stroke-width="1.9" stroke-linecap="round" stroke-linejoin="round"/></svg>
<div class="clip" style="left:869px;top:460px;width:118px;height:24px"><div class="t" style="left:1px;top:4.5px;letter-spacing:-0.1px">В ассортименте (F4)</div></div>
<div class="red" style="left:987px;top:451px;width:159px;height:40px"></div>
<svg class="ic" style="left:998px;top:463.5px" width="14" height="14" viewBox="0 0 14 14"><rect x="0" y="0" width="14" height="14" rx="2.5" fill="#0f6fff"/><path d="M3.2 7.2l2.7 2.8 5-6" fill="none" stroke="#fff" stroke-width="1.9" stroke-linecap="round" stroke-linejoin="round"/></svg>
<div class="t" style="left:1015px;top:464.5px;">Признак разделения</div>
<div class="sel" style="left:1147px;top:458px;width:242px;height:25.5px;line-height:25.5px"><span>В прайсе (F7)</span><svg width="12" height="8" viewBox="0 0 12 8" style="position:absolute;right:4.5px;top:8.25px"><path d="M1.3 1.2L6 5.9l4.7-4.7" fill="none" stroke="#111" stroke-width="2.1"/></svg></div>
<svg class="ic" style="left:1400px;top:464px" width="14" height="14" viewBox="0 0 14 14"><rect x="0.6" y="0.6" width="12.8" height="12.8" rx="2.5" fill="#fff" stroke="#767676" stroke-width="1.1"/></svg>
<div class="t" style="left:1417px;top:464.5px;">В акции</div>
<div class="btn" style="left:1074px;top:490px;width:109.5px;height:24px;line-height:23.6px"><svg width="13" height="13" viewBox="0 0 13 13" style="vertical-align:-1.5px;margin-right:8px"><path d="M6.5 0.5v12M0.5 6.5h12" stroke="#333" stroke-width="1.5"/></svg>Добавить</div>
<div class="btn" style="left:1189px;top:490px;width:140.5px;height:24px;line-height:23.6px"><svg width="15" height="15" viewBox="0 0 15 15" style="vertical-align:-2px;margin-right:7px"><path d="M2.5 10.5l7.3-8.3 2.4 2.1-7.3 8.3-3 .9z" fill="none" stroke="#333" stroke-width="1.2" stroke-linejoin="round"/><line x1="0.5" y1="14" x2="13.5" y2="14" stroke="#3fb8ea" stroke-width="1.2"/></svg>Редактировать</div>
<div class="btn" style="left:1335px;top:490px;width:129.5px;height:24px;line-height:23.6px">Копировать (F6)</div>
<div class="hl" style="left:275px;top:528px;width:1189px"></div>
<div class="t fs" style="left:277px;top:521.5px;">Кол-во к заказу</div>
<svg class="ic" style="left:282px;top:523px" width="11" height="11" viewBox="0 0 11 11"><circle cx="5.5" cy="5.5" r="4.7" fill="none" stroke="#c4c4c4" stroke-width="1.1"/><line x1="3" y1="5.5" x2="8" y2="5.5" stroke="#c4c4c4" stroke-width="1.1"/></svg>
<div class="hl" style="left:275px;top:554px;width:226.5px"></div>
<div class="t fs" style="left:277px;top:548.6px;">Продажи</div>
<svg class="ic" style="left:282px;top:549px" width="11" height="11" viewBox="0 0 11 11"><circle cx="5.5" cy="5.5" r="4.7" fill="none" stroke="#c4c4c4" stroke-width="1.1"/><line x1="3" y1="5.5" x2="8" y2="5.5" stroke="#c4c4c4" stroke-width="1.1"/></svg>
<div class="hl" style="left:511px;top:554px;width:285.5px"></div>
<div class="t fs" style="left:513px;top:548.6px;">Расчетный запас</div>
<svg class="ic" style="left:518px;top:549px" width="11" height="11" viewBox="0 0 11 11"><circle cx="5.5" cy="5.5" r="4.7" fill="none" stroke="#c4c4c4" stroke-width="1.1"/><line x1="3" y1="5.5" x2="8" y2="5.5" stroke="#c4c4c4" stroke-width="1.1"/></svg>
<div class="hl" style="left:806px;top:554px;width:225.5px"></div>
<div class="t fs" style="left:808px;top:548.6px;">Буферы</div>
<svg class="ic" style="left:813px;top:549px" width="11" height="11" viewBox="0 0 11 11"><circle cx="5.5" cy="5.5" r="4.7" fill="none" stroke="#c4c4c4" stroke-width="1.1"/><line x1="3" y1="5.5" x2="8" y2="5.5" stroke="#c4c4c4" stroke-width="1.1"/></svg>
<div class="vl" style="left:506px;top:542px;height:109px"></div>
<div class="vl" style="left:801px;top:542px;height:109px"></div>
<div class="t" style="left:275px;top:575.5px;letter-spacing:0.1px">Продаж в день</div>
<div class="inp" style="left:422px;top:571px;width:79.5px;height:23px;line-height:23px;text-align:right"></div>
<div class="t" style="left:511px;top:575.5px;letter-spacing:0.16px">Дисперсия однодневных продаж</div>
<div class="inp" style="left:717px;top:571px;width:79.5px;height:23px;line-height:23px;text-align:right"></div>
<div class="t" style="left:806px;top:575.5px;letter-spacing:-0.18px">Страховой запас (авто)</div>
<div class="inp" style="left:952px;top:571px;width:79.5px;height:23px;line-height:23px;text-align:right"></div>
<div class="t" style="left:275px;top:603.7px;letter-spacing:0.1px">Кол-во дней</div>
<div class="inp" style="left:422px;top:598px;width:79.5px;height:23.5px;line-height:23.5px;text-align:right"></div>
<div class="t" style="left:511px;top:603.7px;letter-spacing:0px">Z-оценка</div>
<div class="inp" style="left:717px;top:598px;width:79.5px;height:23.5px;line-height:23.5px;text-align:right"><span class="num">1</span></div>
<div class="t" style="left:806px;top:603.7px;letter-spacing:0px">Страховой запас (ручн)</div>
<div class="inp" style="left:952px;top:598px;width:79.5px;height:23.5px;line-height:23.5px;text-align:right"></div>
<div class="t" style="left:275px;top:630.5px;letter-spacing:0.1px">Планируемые продажи</div>
<div class="inp" style="left:422px;top:626px;width:79.5px;height:23px;line-height:23px;text-align:right"></div>
<div class="t" style="left:511px;top:630.5px;letter-spacing:-0.1px">Коэффициент сезонности</div>
<div class="inp" style="left:717px;top:626px;width:79.5px;height:23px;line-height:23px;text-align:right"><span class="num">1</span></div>
<div class="hl" style="left:0;top:654px;width:1468px"></div>
<div class="btn" style="left:3px;top:659px;width:46px;height:24px;line-height:23.6px"><svg width="4" height="12" viewBox="0 0 4 12" style="vertical-align:-1.5px"><circle cx="2" cy="1.6" r="1.15" fill="#111"/><circle cx="2" cy="6" r="1.15" fill="#111"/><circle cx="2" cy="10.4" r="1.15" fill="#111"/></svg></div>
<div class="btn" style="left:961px;top:659px;width:45.5px;height:24px;line-height:23.6px"><svg width="14" height="14" viewBox="0 0 16 16" style="vertical-align:-2.5px"><path d="M2 7.4A6 6 0 0 1 12.6 4.2" fill="none" stroke="#333" stroke-width="1.7"/><path d="M14.6 0.8v5.4H9.2z" fill="#333"/><path d="M14 8.6A6 6 0 0 1 3.4 11.8" fill="none" stroke="#3fb8ea" stroke-width="1.7"/><path d="M1.4 15.2V9.8h5.4z" fill="#3fb8ea"/></svg></div>
<div class="btn" style="left:1011px;top:659px;width:115.5px;height:24px;line-height:23.6px"><svg width="14" height="14" viewBox="0 0 14 14" style="vertical-align:-2px;margin-right:6px"><path d="M2.5 0.8h7l3.7 3.4v7.3a1.7 1.7 0 0 1-1.7 1.7h-9A1.7 1.7 0 0 1 .8 11.5v-9A1.7 1.7 0 0 1 2.5.8z" fill="none" stroke="#444" stroke-width="1.3"/><path d="M3.2 13V8h7.6v5" fill="none" stroke="#3fb8ea" stroke-width="1.3"/></svg><span style="color:#8a8a8a">Сохранить</span></div>
<div class="btn" style="left:1132px;top:659px;width:111px;height:24px;line-height:23.6px"><svg width="12.5" height="13.5" viewBox="0 0 14 15" style="vertical-align:-2px;margin-right:7px"><path d="M2.5 4v8.6a1.6 1.6 0 0 0 1.6 1.6h5.8a1.6 1.6 0 0 0 1.6-1.6V4" fill="none" stroke="#444" stroke-width="1.4"/><path d="M0.5 3.2h13M4.8 3V0.8h4.4V3" fill="none" stroke="#3fb8ea" stroke-width="1.3"/></svg><span style="color:#8a8a8a">Отменить</span></div>
<div class="btn" style="left:1248px;top:659px;width:109.5px;height:24px;line-height:23.6px"><svg width="15" height="12" viewBox="0 0 15 12" style="vertical-align:-1px;margin-right:7px"><path d="M1 6.5l4 4.2L14 1" fill="none" stroke="#333" stroke-width="1.5"/></svg>Провести</div>
<div class="btn" style="left:1362px;top:659px;width:102.5px;height:24px;line-height:23.6px"><svg width="12" height="12" viewBox="0 0 12 12" style="vertical-align:-1px;margin-right:8px"><path d="M1 1l10 10M11 1L1 11" fill="none" stroke="#333" stroke-width="1.5"/></svg>Закрыть</div>
</div></body></html>
